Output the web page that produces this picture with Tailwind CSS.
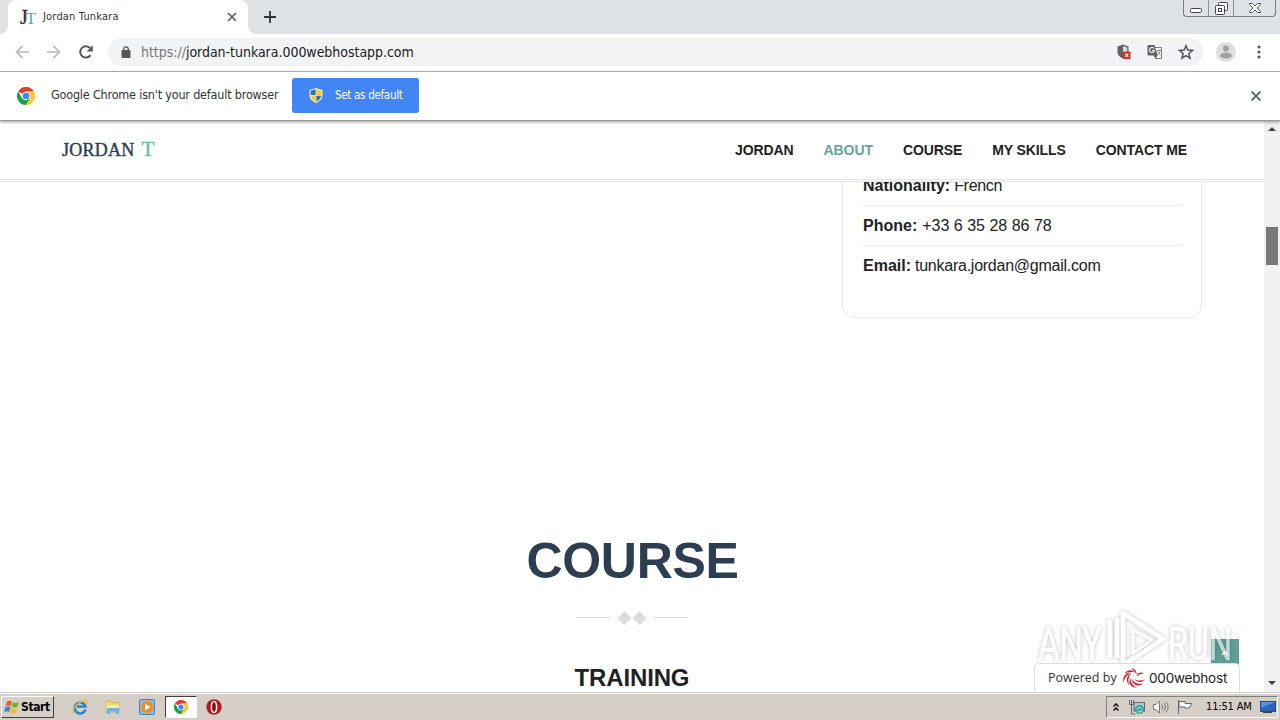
<!DOCTYPE html>
<html lang="en">
  <head>
    <meta charset="UTF-8" />
    <meta name="viewport" content="width=device-width, initial-scale=1.0" />
    <title>Jordan Tunkara</title>
    <script src="https://cdn.jsdelivr.net/npm/@tailwindcss/browser@4"></script>
  </head>
  <body class="flex h-[720px] w-[1280px] flex-col overflow-hidden bg-white font-['DejaVu_Sans_Condensed','DejaVu_Sans',sans-serif] text-[#222]">
    <!-- Shared shapes -->
    <svg class="absolute h-0 w-0" aria-hidden="true">
      <symbol id="chrome" viewBox="0 0 18 18">
        <path fill="#e33b2e" d="M9 9 1.2 4.5A9 9 0 0 1 16.8 4.5H9z" />
        <path fill="#fcc934" d="M9 4.5h7.8A9 9 0 0 1 9 18l3.9-6.7z" />
        <path fill="#1e9e4a" d="M1.2 4.5A9 9 0 0 0 9 18l3.9-6.7L9 9l-3.9 2.3z" />
        <circle cx="9" cy="9" r="4.3" fill="#fff" />
        <circle cx="9" cy="9" r="3.3" fill="#4285f4" />
      </symbol>
    </svg>

    <!-- Tab strip -->
    <div class="flex h-[34px] shrink-0 items-end bg-[#dee1e6]">
      <div class="relative ml-2 flex h-[34px] w-[240px] items-center rounded-t-lg bg-white pl-3">
        <svg class="absolute -left-2 bottom-0 h-2 w-2" viewBox="0 0 8 8"><path fill="#fff" d="M8 0v8H0a8 8 0 0 0 8-8z" /></svg>
        <svg class="absolute -right-2 bottom-0 h-2 w-2" viewBox="0 0 8 8"><path fill="#fff" d="M0 0v8h8a8 8 0 0 1-8-8z" /></svg>
        <div class="flex w-[23px] items-center font-['Liberation_Serif',serif] leading-none">
          <span class="text-[20px] text-[#26323f] [-webkit-text-stroke:0.4px_#26323f]">J</span>
          <span class="-ml-[2px] pt-0.5 text-[17px] text-[#5faa9e]">T</span>
        </div>
        <span class="text-[11px] tracking-[0.18px] text-[#333]">Jordan Tunkara</span>
        <svg class="mr-[11px] ml-auto h-[10px] w-[10px]" viewBox="0 0 10 10" stroke="#5f6368" stroke-width="1.7"><path d="M1 1l8 8M9 1L1 9" /></svg>
      </div>
      <svg class="mb-[11px] ml-4 h-3 w-3" viewBox="0 0 12 12" stroke="#30343a" stroke-width="1.8"><path d="M6 0v12M0 6h12" /></svg>
      <div class="mr-1 ml-auto flex h-[17px] w-[93px] self-start rounded-b-[4px] border border-t-0 border-[#777c87] text-[#41454d]">
        <div class="flex w-[25px] justify-center border-r border-[#8b909a] pt-2">
          <svg class="h-[5px] w-3" viewBox="0 0 12 5" fill="#fff" stroke="currentColor"><rect x=".5" y=".5" width="11" height="4" rx="1" /></svg>
        </div>
        <div class="flex w-[25px] justify-center border-r border-[#8b909a] pt-0.5">
          <svg class="h-[13px] w-[13px]" viewBox="0 0 13 13" fill="#fff" stroke="currentColor"><rect x="3.5" y=".5" width="9" height="8" rx="1" /><rect x=".5" y="3.5" width="9" height="9" rx="1" /><rect x="3.5" y="6.5" width="3" height="3" /></svg>
        </div>
        <div class="flex flex-1 justify-center pt-[3px]">
          <svg class="h-[10px] w-3" viewBox="0 0 12 10" fill="#fff" stroke="currentColor" stroke-width=".9"><path d="M.5.5h3L6 3 8.500.5h3v1L8 5l3.500 3.500v1h-3L6 7 3.500 9.500h-3v-1L4 5 .5 1.500z" /></svg>
        </div>
      </div>
    </div>

    <!-- Toolbar -->
    <div class="flex h-[38px] shrink-0 items-center border-b border-[#b5b5b5] bg-white pb-px">
      <svg class="ml-[15px] h-[14px] w-[14px]" viewBox="0 0 14 14" fill="none" stroke="#b6b8ba" stroke-width="1.700"><path d="M14 7H1.500M7.500 1 1.500 7l6 6" /></svg>
      <svg class="ml-[18px] h-[14px] w-[14px]" viewBox="0 0 14 14" fill="none" stroke="#b6b8ba" stroke-width="1.700"><path d="M0 7h12.500M6.500 1l6 6-6 6" /></svg>
      <svg class="ml-[18px] h-[14px] w-[14px]" viewBox="0 0 14 14"><path d="M11.600 10.200A5.700 5.700 0 1 1 11.300 3.200" fill="none" stroke="#55595e" stroke-width="2" /><path d="M13.800.2v6.200H7.600z" fill="#55595e" /></svg>
      <div class="ml-[15px] flex h-7 w-[1095px] items-center rounded-full bg-[#f1f3f4] pl-[13px]">
        <svg class="h-3 w-[10px]" viewBox="0 0 10 12"><rect x=".5" y="4" width="9" height="8" rx="1" fill="#54575c" /><path d="M2.700 5V3.200a2.300 2.300 0 0 1 4.600 0V5" fill="none" stroke="#54575c" stroke-width="1.300" /></svg>
        <span class="ml-[10px] text-[14px] tracking-[-0.03px] whitespace-nowrap text-[#202124]"><span class="text-[#73777c]">https://</span>jordan-tunkara.000webhostapp.com</span>
        <div class="mr-[9px] ml-auto flex items-center gap-[15px]">
          <svg class="h-4 w-4" viewBox="0 0 15 16"><path fill="#5f6368" d="M6.500.5 12 2.500V8c0 3-2.500 5.600-5.500 6.500C3.500 13.600 1 11 1 8V2.500z" /><path fill="#d9dbdd" d="M6.500 2 10.700 3.500V8H6.500z" /><rect x="6.500" y="7.500" width="7.500" height="7.500" rx=".8" fill="#d93025" /><path d="M8.700 9.700l3.100 3.100m0-3.100-3.100 3.100" stroke="#fff" stroke-width="1.200" /></svg>
          <svg class="h-4 w-4" viewBox="0 0 16 16"><path fill="#fff" stroke="#777b80" d="M6.500 3.500h8v11h-6z" /><path fill="#5f6368" d="M1.500 1h6l3 10.500h-9a1 1 0 0 1-1-1V2a1 1 0 0 1 1-1zM7 11.500h3.500L8.500 15z" /><path d="M7 4.500A2.500 2.500 0 1 0 7.400 6.500H5" fill="none" stroke="#fff" stroke-width="1.100" /><path d="M9.500 6.500H14M12 5.500v1M13 6.500c0 2-1 3.500-3 4.500M10.500 7.500c.5 2 1.500 3 3 3.500" fill="none" stroke="#777b80" stroke-width=".9" /></svg>
          <svg class="h-4 w-4" viewBox="0 0 16 16"><path fill="none" stroke="#505459" stroke-width="1.500" d="m8 1.800 1.800 4.300 4.700.4-3.600 3 1.100 4.600L8 11.700l-4 2.400 1.100-4.600-3.600-3 4.700-.4z" /></svg>
        </div>
      </div>
      <svg class="ml-[13px] h-5 w-5" viewBox="0 0 20 20"><circle cx="10" cy="10" r="10" fill="#dedede" /><circle cx="10" cy="6.500" r="3" fill="#a2a2a2" /><ellipse cx="10" cy="13.500" rx="6" ry="3" fill="#a2a2a2" /></svg>
      <svg class="ml-[21px] h-[14px] w-[4px]" viewBox="0 0 4 14" fill="#55595e"><circle cx="2" cy="2" r="1.600" /><circle cx="2" cy="7" r="1.600" /><circle cx="2" cy="12" r="1.600" /></svg>
    </div>

    <!-- Default browser bar -->
    <div class="relative z-20 flex h-[49px] shrink-0 items-center border-b border-[#999] bg-white pb-px shadow-[0_1px_3px_rgba(0,0,0,0.4)]">
      <svg class="ml-[17px] h-[18px] w-[18px]"><use href="#chrome" /></svg>
      <span class="ml-4 w-[241px] text-[12.500px] tracking-[-0.19px] whitespace-nowrap text-[#333]">Google Chrome isn't your default browser</span>
      <button class="flex h-[35px] w-[127px] items-center rounded-[3px] bg-[#4285f4] pl-[17px] text-[11.500px] text-white">
        <svg class="mr-[12px] h-[15px] w-[14px]" viewBox="0 0 14 15"><path fill="#f4e9b0" d="M7 0 13.500 2v5c0 4-3 6.500-6.500 8C3.500 13.500.5 11 .5 7V2z" /><path fill="#2a72c8" d="M6.600 1.300V7H1.700V2.800zM7.400 7.800h4.800c-.4 2.800-2.400 4.700-4.800 5.900z" /><path fill="#f8cf26" d="M7.400 1.300 12.300 2.800V7H7.400zM1.800 7.800h4.800v5.900C4.200 12.500 2.200 10.600 1.800 7.800z" /></svg>
        <span class="tracking-[-0.3px] whitespace-nowrap">Set as default</span>
      </button>
      <svg class="mr-[19px] ml-auto h-[10px] w-[10px]" viewBox="0 0 10 10" stroke="#5f6368" stroke-width="1.800"><path d="M.5.500l9 9M9.500.500l-9 9" /></svg>
    </div>

    <!-- Page -->
    <div class="relative flex h-[571px] shrink-0 font-['Liberation_Sans',Arial,sans-serif]">
      <main class="flex w-[1264px] flex-col overflow-hidden">
        <header class="flex h-[61px] shrink-0 items-center border-b border-[#e6e6e6] pb-px">
          <div class="flex h-[59px] w-full items-center border-b border-[#e6e6e6]">
            <div class="ml-[62px] flex items-baseline pb-0.5 font-['Liberation_Serif',serif] leading-none">
              <span class="text-[18px] tracking-[0.25px] text-[#2c3e50] [-webkit-text-stroke:0.4px_#2c3e50]">JORDAN</span>
              <span class="ml-[7px] text-[21px] text-[#66bda5] [-webkit-text-stroke:0.4px_#66bda5]">T</span>
            </div>
            <nav class="mr-[77px] ml-auto flex gap-[30px] text-[14px] font-bold tracking-[-0.1px] text-[#222]">
              <a href="#jordan">JORDAN</a>
              <a href="#about" class="text-[#68a4a0]">ABOUT</a>
              <a href="#course">COURSE</a>
              <a href="#skills">MY SKILLS</a>
              <a href="#contact">CONTACT ME</a>
            </nav>
          </div>
        </header>

        <section id="about" class="h-[136px] shrink-0 overflow-hidden">
          <div class="-mt-4 ml-[842px] h-[152px] w-[360px] rounded-b-xl border border-t-0 border-[#ebebeb] px-5 text-[16px] text-[#222]">
            <p class="flex h-10 items-center gap-1 border-b border-[#eee]"><strong>Nationality:</strong> <span class="tracking-[-0.3px]">French</span></p>
            <p class="flex h-10 items-center gap-[5px] border-b border-[#eee]"><strong>Phone:</strong> <span>+33 6 35 28 86 78</span></p>
            <p class="flex h-10 items-center gap-1"><strong>Email:</strong> <span class="tracking-[-0.25px]">tunkara.jordan@gmail.com</span></p>
          </div>
        </section>

        <section id="course" class="flex flex-col items-center pt-[213px]">
          <h2 class="ml-px text-[50px] leading-[60px] font-bold tracking-[-0.3px] text-[#2c3e50]">COURSE</h2>
          <div class="mt-[19px] flex h-[15px] items-center">
            <span class="h-px w-[34px] bg-[#ddd]"></span>
            <svg class="mx-[7px] h-[14px] w-[30px]" viewBox="0 0 30 14" fill="#dcdcdc"><path d="M7.500 0l7 7-7 7-7-7zM22.500 0l7 7-7 7-7-7z" /></svg>
            <span class="h-px w-[34px] bg-[#ddd]"></span>
          </div>
          <h3 class="mt-[38px] text-[24px] leading-[30px] font-bold tracking-[-0.15px] whitespace-nowrap text-[#222]">TRAINING</h3>
        </section>
      </main>

      <!-- Scrollbar -->
      <div class="flex w-4 flex-col items-center bg-[#f1f1f1]">
        <svg class="mt-[6px] h-[4px] w-2" viewBox="0 0 8 4" fill="#404040"><path d="M0 4l4-4 4 4z" /></svg>
        <div class="mt-[96px] h-[38px] w-3 bg-[#787878]"></div>
        <svg class="mt-auto mb-[7px] h-[4px] w-2" viewBox="0 0 8 4" fill="#404040"><path d="M0 0l4 4 4-4z" /></svg>
      </div>

      <!-- Back to top -->
      <a href="#jordan" class="absolute top-[518px] left-[1211px] flex h-7 w-7 items-center justify-center bg-[#5f9f98]">
        <svg class="h-[5px] w-2" viewBox="0 0 8 5" fill="none" stroke="#fff" stroke-width="1.500"><path d="M1 4l3-3 3 3" /></svg>
      </a>

      <!-- Watermark -->
      <svg class="absolute top-[482px] left-[1030px] h-[72px] w-[215px] drop-shadow-[0_0_2px_rgba(0,0,0,0.4)]" viewBox="0 0 215 72" font-family="Roboto, sans-serif" font-size="47" fill="#fff" stroke="#fff" stroke-width=".6" opacity="0.6">
        <text x="8" y="57" textLength="64" lengthAdjust="spacingAndGlyphs">ANY</text>
        <g fill="none" stroke-width="5" stroke-linejoin="round">
          <path d="M80 17v38M87 55V15M93 64V10l40 26-38 25" />
          <path d="M103 27v23l19-13z" stroke-width="3" />
        </g>
        <text x="138" y="57" textLength="64" lengthAdjust="spacingAndGlyphs">RUN</text>
      </svg>

      <!-- Hosting badge -->
      <div class="absolute top-[542px] left-[1034px] flex h-[29px] w-[206px] items-center rounded-t-[5px] border border-b-0 border-[#ddd] bg-white pl-[13px] text-[#333]">
        <span class="w-[74px] text-[12.500px] whitespace-nowrap [font-family:'Open_Sans','Noto_Sans',sans-serif]">Powered by</span>
        <svg class="h-5 w-6" viewBox="0 0 24 20" fill="#d32136">
          <path d="M22.500 11.500c-2 3.500-8 3.500-10-.5 3 2 7 2 10 .5z" />
          <path d="M21 15.500c-4 4-11 1.500-11-4.500 2 4 6 5.500 11 4.500z" />
          <path d="M15 19.500c-6 .5-9.500-4.500-6.500-10 0 5 2 8.500 6.500 10z" />
          <path d="M7.500 17.500C3.500 13.500 4 8 9 5.500c-3 4-3.500 8-1.500 12z" />
          <path d="M1.500 14.500C0 8.500 4 4 9.500 4.500 5 6.500 2.500 9.500 1.500 14.500z" />
          <path d="M2 6c3-4.500 8-5 11-1.500C9 3.500 5.500 4 2 6z" />
          <path d="M8.500.5c4-.5 6.500 2 6 6C13 3.500 11.500 1.800 8.500.5z" />
          <path d="M22 5.500c-3-2-6.500-.5-7.500 3 2-2 4.500-3 7.500-3z" />
        </svg>
        <span class="ml-[3px] text-[13.500px] tracking-[-0.2px] text-[#222] [font-family:Inter,sans-serif]">000webhost</span>
      </div>
    </div>

    <!-- Taskbar -->
    <div class="flex h-7 shrink-0 items-center border-t border-[#d4d0c8] bg-[#d5cfc7] pt-px text-[11px] text-black shadow-[inset_0_1px_0_#fff]">
      <button class="ml-px flex h-[22px] w-[53px] items-center border border-t-white border-r-[#404040] border-b-[#404040] border-l-white pl-0.5 font-bold">
        <svg class="h-4 w-[17px]" viewBox="0 0 17 16"><path fill="#e85b24" d="M3 2.500c2-1.200 3.500-1 5 0L6.700 7.200c-1.500-1-3.200-1-5 0z" /><path fill="#71b52c" d="M9 3c2 1.200 4 1 6 0l-1.400 4.700c-2 1-4 1-6 0z" /><path fill="#3e7fd0" d="M1.400 8.200c2-1 3.500-1 5 0L5 13c-1.500-1-3-1-5 0z" /><path fill="#f6bd22" d="M7.300 8.700c2 1.200 4 1.200 6 .2L12 13.500c-2 1.200-4 1-6 0z" /></svg>
        <span class="text-[12px] tracking-[-0.4px]">Start</span>
      </button>
      <svg class="ml-[18px] h-4 w-4" viewBox="0 0 16 16" fill="none"><path d="M13.500 10.500A5.500 5.500 0 1 1 13.500 7.500H5" stroke="#2187cf" stroke-width="2.600" /><path d="M2 14.500C-1 12 5 3 12 1.500c4-.8 3.500 2 2 4" stroke="#efb928" stroke-width="1.300" /></svg>
      <svg class="ml-[17px] h-4 w-4" viewBox="0 0 16 16"><path fill="#f3d878" stroke="#c7a548" stroke-width=".7" d="M1 2h5l1 1.500h7V13H1z" /><path fill="#f9ebad" d="M1.500 6H14v6H1.500z" /><path fill="#6fb2df" d="M2 9h12v6h-3v-2.500H5V15H2z" /></svg>
      <svg class="ml-[18px] h-4 w-4" viewBox="0 0 16 16"><rect x=".5" y=".5" width="15" height="15" rx="1" fill="#8cbbe5" stroke="#4784bd" /><circle cx="8" cy="8" r="6" fill="#f28c18" /><path d="M6 4.500 11.500 8 6 11.500z" fill="#fff" /></svg>
      <div class="ml-[10px] flex h-[22px] w-8 items-center justify-center border border-t-[#404040] border-r-white border-b-white border-l-[#404040] bg-white">
        <svg class="h-[14px] w-[14px]"><use href="#chrome" /></svg>
      </div>
      <svg class="ml-[9px] h-4 w-4" viewBox="0 0 16 16"><circle cx="8" cy="8" r="7.700" fill="#b8161c" /><ellipse cx="8" cy="8" rx="2.600" ry="5.500" fill="#8b080d" stroke="#fff" stroke-width="1.500" /></svg>

      <div class="mr-0.5 ml-auto flex h-[22px] w-[172px] items-center border border-t-[#808080] border-r-white border-b-white border-l-[#808080]">
        <svg class="ml-[6px] h-2 w-[6px]" viewBox="0 0 6 8" fill="none" stroke="#000" stroke-width="1.400"><path d="M.5 3.500 3 1l2.500 2.500M.5 7.500 3 5l2.500 2.500" /></svg>
        <svg class="ml-[10px] h-4 w-4" viewBox="0 0 16 16"><rect x="5" y="3.500" width="10.500" height="8.500" fill="#a9c9ce" stroke="#5b6a6c" /><path d="M2.500 1v5M.5 1v4.500h4V1M2.500 6v9H6" fill="none" stroke="#666" /><circle cx="10.500" cy="10.500" r="4.500" fill="#35a398" /><path d="M8 10.500a2.500 2.500 0 0 1 4.500-1M13 11a2.500 2.500 0 0 1-4.500 1" fill="none" stroke="#d9fffa" /></svg>
        <svg class="ml-2 h-[14px] w-4" viewBox="0 0 16 14" fill="#fff" stroke="#777"><path d="M.5 4.500H3L6.500 1v12L3 9.500H.5z" /><path d="M8.500 4.500c1.500 1.500 1.500 3.500 0 5M10.500 3c2.500 2.500 2.500 5.500 0 8M12.500 1.500c3.500 3.500 3.500 7.500 0 11" fill="none" /></svg>
        <svg class="ml-2 h-[14px] w-4" viewBox="0 0 16 14" fill="#fff" stroke="#666"><path d="M1.500 0v14" /><path d="M2 1.500h6v2h6.500l-2 4.500H8V7H2z" /></svg>
        <span class="ml-[13px] w-[48px] text-[11px] tracking-[-0.15px] whitespace-nowrap">11:51 AM</span>
        <svg class="ml-[6px] h-3 w-4" viewBox="0 0 16 12"><rect x=".5" y=".5" width="15" height="10" fill="#2c64b8" stroke="#294a80" /><path d="M1 1h14L1 7z" fill="#5a93dd" /><path d="M3 11.500h9" stroke="#444" /></svg>
      </div>
    </div>
  </body>
</html>
